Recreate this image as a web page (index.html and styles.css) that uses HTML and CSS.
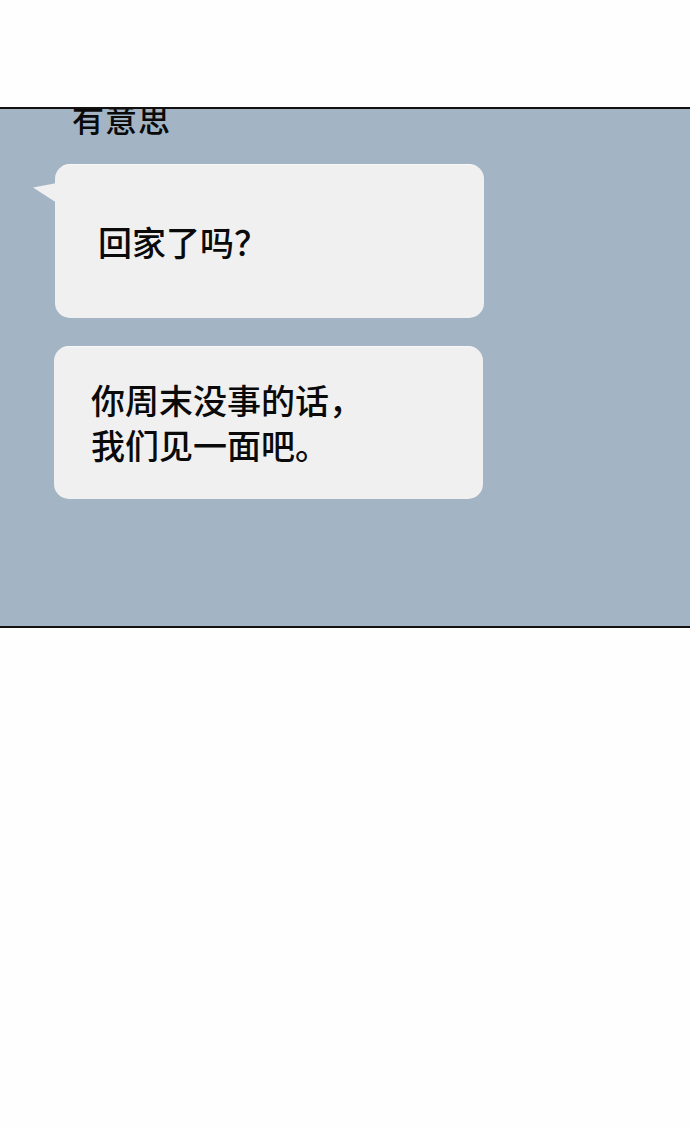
FILE: index.html
```html
<!DOCTYPE html>
<html lang="zh">
<head>
<meta charset="utf-8">
<link rel="stylesheet" href="styles.css">
</head>
<body>
<div class="page">
  <div class="top-space"></div>
  <section class="panel">
    <div class="caption">有意思</div>
    <div class="bubbles">
      <div class="bubble bubble-first">
        <span class="tail"></span>
        <p class="msg msg-one">回家了吗？</p>
      </div>
      <div class="bubble bubble-second">
        <p class="msg msg-two">你周末没事的话，<br>我们见一面吧。</p>
      </div>
    </div>
  </section>
  <div class="bottom-space"></div>
</div>
</body>
</html>
```
FILE: styles.css
```css
html, body {
  margin: 0;
  padding: 0;
  background: #fefefe;
}
.page {
  width: 690px;
  height: 1128px;
  font-family: "Noto Sans CJK SC", "Noto Sans", sans-serif;
  color: #0a0a0a;
}
.top-space {
  height: 107px;
}
.panel {
  height: 517px;
  border-top: 2px solid #141010;
  border-bottom: 2px solid #141010;
  background: #a3b4c4;
  overflow: hidden;
  display: flex;
  flex-direction: column;
}
.caption {
  margin: -7px 0 0 72px;
  font-size: 32px;
  font-weight: 500;
  line-height: 32px;
  height: 29px;
  letter-spacing: 1px;
}
.bubbles {
  display: flex;
  flex-direction: column;
  gap: 28px;
  padding: 33px 0 0 55px;
}
.bubble {
  position: relative;
  width: 429px;
  box-sizing: border-box;
  background: #f0f0f0;
  border-radius: 15px;
  border-top: 1px solid #f8f8f8;
}
.bubble-first {
  height: 154px;
  padding: 54px 0 0 43px;
}
.bubble-second {
  height: 153px;
  margin-left: -1px;
  padding: 30px 0 0 37px;
}
.tail {
  position: absolute;
  left: -22px;
  top: 18px;
  width: 24px;
  height: 20px;
  background: #f0f0f0;
  clip-path: polygon(0 22%, 100% 0, 100% 100%);
}
.msg {
  margin: 0;
  font-size: 34px;
  font-weight: 500;
  line-height: 45px;
}
```
